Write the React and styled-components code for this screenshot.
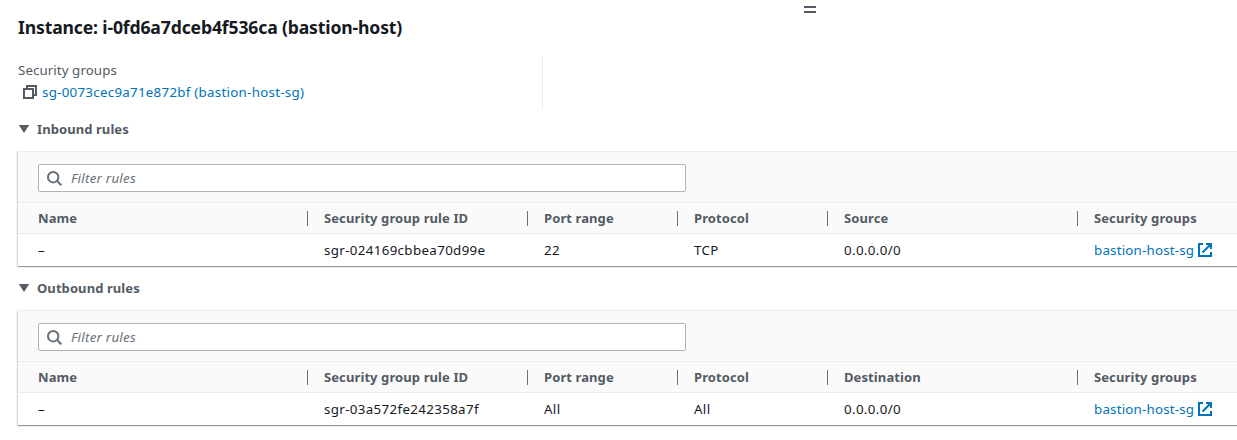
import React from 'react';
import styled, { createGlobalStyle } from 'styled-components';

const Global = createGlobalStyle`
  * { box-sizing: border-box; }
  html, body { margin: 0; background: #fff; overflow: hidden; }
  body { font: 13.33px/20px "Noto Sans", "Open Sans", sans-serif; color: #16191f; }
`;
const Panel = styled.main`
  width: 1237px; height: 440px; overflow: hidden; padding-left: 18px; position: relative;
`;
const Handle = styled.div`
  position: absolute; left: 804px; top: 6px; width: 12px; height: 7px;
  border-top: 2px solid #545b64; border-bottom: 2px solid #545b64;
`;
const Title = styled.h1`
  margin: 0; padding-top: 15px; height: 56px; font: 700 17.6px/24px "Noto Sans", sans-serif;
  letter-spacing: -0.15px; white-space: nowrap;
`;
const Details = styled.section`
  width: 525px; height: 54px; border-right: 1px solid #eaeded; padding-top: 4px;
`;
const Label = styled.div`color: #545b64; height: 22px; letter-spacing: 0.07px;`;
const GroupLink = styled.a`
  color: #0073bb; display: flex; align-items: center; white-space: nowrap;
  gap: ${p => p.$gap || '4px'}; padding-left: ${p => p.$indent || '0'};
  letter-spacing: ${p => p.$tracking || '0.2px'};
`;
const Section = styled.section`height: 159px;`;
const SectionTitle = styled.h2`
  margin: 0; height: 41px; padding-top: 9px; display: flex; gap: 8px;
  font-size: 13px; line-height: 20px; font-weight: 700; color: #545b64; letter-spacing: 0.08px;
  svg { margin-top: 5px; }
`;
const Card = styled.div`
  height: 115px; margin-right: -20px; background: #fff; border-top: 1px solid #eaeded;
  box-shadow: 0 1px 1px rgba(0,28,36,.24), 1px 1px 1px rgba(0,28,36,.12), -1px 1px 1px rgba(0,28,36,.15);
`;
const FilterBar = styled.div`background: #fafafa; height: 50px; padding: 12px 20px 0;`;
const Filter = styled.div`
  width: 648px; height: 28px; border: 1px solid #aab7b8; border-radius: 2px; background: #fff;
  display: flex; align-items: center; padding-left: 8px; gap: 9px;
  color: #687078; font-style: italic; letter-spacing: 0.25px;
`;
const Row = styled.div`
  display: grid; grid-template-columns: 290px 220px 150px 150px 250px 1fr; align-items: center;
  height: 32px; color: #16191f; letter-spacing: 0.35px;
`;
const HeadRow = styled(Row)`
  background: #fafafa; border: solid #eaeded; border-width: 1px 0;
  color: #545b64; font-size: 13px; font-weight: 700; letter-spacing: 0.1px;
`;
const Cell = styled.div`
  padding-left: ${p => p.$first ? '20px' : '16px'}; white-space: nowrap;
`;
const HeadCell = styled(Cell)`
  height: 15px; line-height: 15px; margin-left: ${p => p.$first ? '0' : '-1px'};
  border-left: ${p => p.$first ? '0' : '1px solid #687078'};
`;

const Copy = () => <svg width="14" height="14" viewBox="0 0 14 14" fill="none" stroke="#545b64" strokeWidth="2"><path d="M1 4h9v9H1zM4 4V1h9v9h-3"/></svg>;
const Search = () => <svg width="15" height="15" viewBox="0 0 15 15" fill="none" stroke="#687078" strokeWidth="2"><circle cx="6.2" cy="6.2" r="5.2"/><path d="M10 10l4.3 4.3"/></svg>;
const External = () => <svg width="14" height="14" viewBox="0 0 14 14" fill="none" stroke="#0073bb" strokeWidth="2"><path d="M8 1h5v5M13 1L4.5 9.5M5 1H1v12h12V9"/></svg>;
const Caret = () => <svg width="11" height="9" viewBox="0 0 11 9" fill="#545b64"><path d="M.8 1h10.4L6 9z"/></svg>;

function Rules({ title, last, values }) {
  const heads = ['Name', 'Security group rule ID', 'Port range', 'Protocol', last, 'Security groups'];
  return <Section>
    <SectionTitle><Caret />{title}</SectionTitle>
    <Card>
      <FilterBar><Filter><Search />Filter rules</Filter></FilterBar>
      <HeadRow>{heads.map((h, i) => <HeadCell key={h} $first={i === 0}>{h}</HeadCell>)}</HeadRow>
      <Row>{values.map((v, i) => <Cell key={i} $first={i === 0}>{v}</Cell>)}
        <Cell><GroupLink>bastion-host-sg<External /></GroupLink></Cell></Row>
    </Card>
  </Section>;
}

export default function App() {
  return <><Global /><Panel>
    <Handle />
    <Title>Instance: i-0fd6a7dceb4f536ca (bastion-host)</Title>
    <Details><Label>Security groups</Label><GroupLink $indent="5px" $gap="5px" $tracking="0.27px"><Copy />sg-0073cec9a71e872bf (bastion-host-sg)</GroupLink></Details>
    <Rules title="Inbound rules" last="Source" values={['–', 'sgr-024169cbbea70d99e', '22', 'TCP', '0.0.0.0/0']} />
    <Rules title="Outbound rules" last="Destination" values={['–', 'sgr-03a572fe242358a7f', 'All', 'All', '0.0.0.0/0']} />
  </Panel></>;
}
